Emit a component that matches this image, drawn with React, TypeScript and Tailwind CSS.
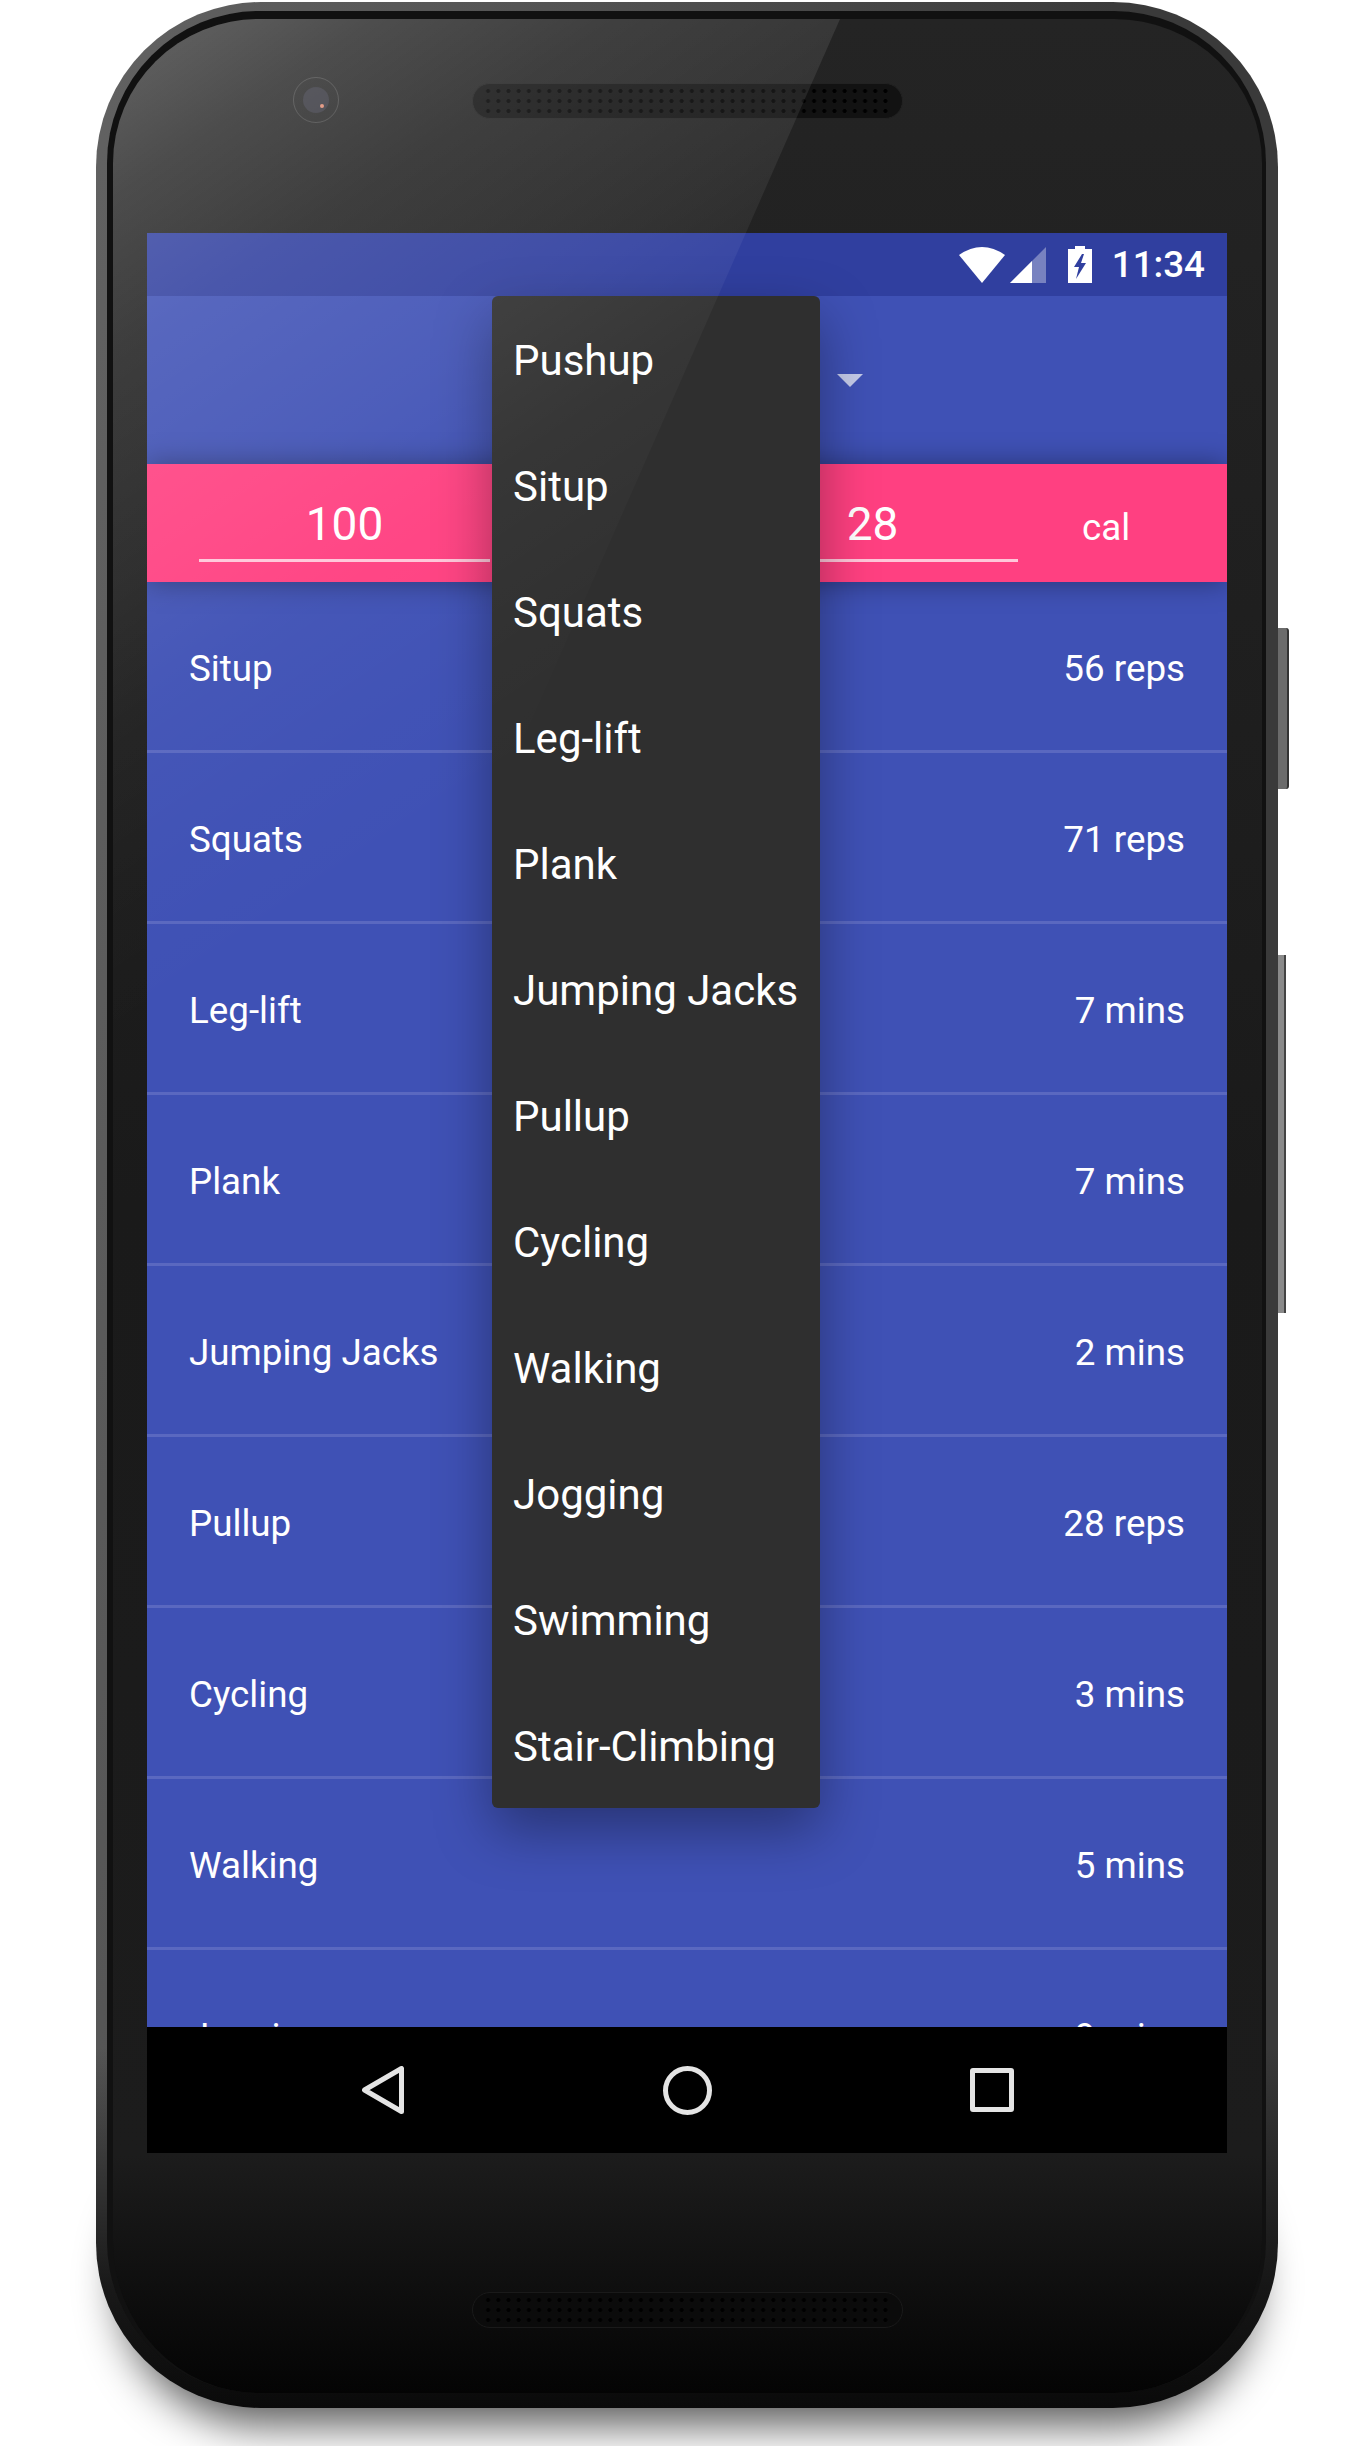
const listRows = [
  ["Situp", "56 reps"],
  ["Squats", "71 reps"],
  ["Leg-lift", "7 mins"],
  ["Plank", "7 mins"],
  ["Jumping Jacks", "2 mins"],
  ["Pullup", "28 reps"],
  ["Cycling", "3 mins"],
  ["Walking", "5 mins"],
  ["Jogging", "9 mins"],
];

const menuItems = [
  "Pushup",
  "Situp",
  "Squats",
  "Leg-lift",
  "Plank",
  "Jumping Jacks",
  "Pullup",
  "Cycling",
  "Walking",
  "Jogging",
  "Swimming",
  "Stair-Climbing",
];

const StatusBar = () => (
  <div className="flex h-[63px] shrink-0 items-center justify-end bg-[#303f9f] pr-[22px]">
    <svg width="46" height="36" viewBox="0 0 46 36">
      <path d="M0 8 Q23 -8 46 8 L23 36 Z" fill="#fff" />
    </svg>
    <svg width="36" height="36" viewBox="0 0 36 36" className="ml-[5px]">
      <path d="M0 36 L36 0 V36 Z" fill="#fff" fillOpacity="0.35" />
      <path d="M0 36 L22 14 V36 Z" fill="#fff" />
    </svg>
    <svg width="24" height="37" viewBox="0 0 24 37" className="ml-[22px] -mt-[1px]">
      <path
        fillRule="evenodd"
        d="M7 0 H17 V3 H24 V37 H0 V3 H7 Z M14 8 L6 21 H11 L8 33 L18 17 H13 L16 8 Z"
        fill="#fff"
      />
    </svg>
    <span className="ml-[20px] mt-[2px] text-[36.75px] leading-none font-medium text-white">
      11:34
    </span>
  </div>
);

const Field = ({ value }: { value: string }) => (
  <div className="flex h-full w-[291px] flex-col items-center justify-end pb-[20px]">
    <span className="text-[46px] leading-[56px] text-white">{value}</span>
    <div className="mt-[7px] h-[3px] w-full bg-white/70" />
  </div>
);

const Screen = () => (
  <div className="relative flex h-[1920px] w-[1080px] shrink-0 flex-col overflow-hidden">
    <StatusBar />
    <div className="flex h-[168px] shrink-0 items-start bg-[#3f51b5] pt-[78px] pl-[690px]">
      <svg width="26" height="13" viewBox="0 0 26 13">
        <path d="M0 0 H26 L13 13 Z" fill="#fff" fillOpacity="0.7" />
      </svg>
    </div>
    <div className="relative z-10 flex h-[118px] shrink-0 bg-[#ff4081] pl-[52px] shadow-[0_0_26px_rgba(0,0,0,0.38)]">
      <Field value="100" />
      <div className="ml-[237px]">
        <Field value="28" />
      </div>
      <div className="flex h-full w-[176px] items-end justify-center pb-[32px]">
        <span className="text-[36.75px] leading-[44px] text-white">cal</span>
      </div>
    </div>
    <div className="flex-1 overflow-hidden bg-[#3f51b5]">
      {listRows.map(([name, amount]) => (
        <div
          key={name}
          className="flex h-[171px] items-center justify-between border-b-[3px] border-[#5a68c0] px-[42px] pt-[5px] text-[36.75px] text-white"
        >
          <span>{name}</span>
          <span>{amount}</span>
        </div>
      ))}
    </div>
    <div className="flex h-[126px] shrink-0 items-center bg-black pl-[215px]">
      <svg width="42" height="48" viewBox="0 0 42 48">
        <path
          d="M39.5 2.5 V45.5 L2.5 24 Z"
          fill="none"
          stroke="#e4e4e4"
          strokeWidth="5"
          strokeLinejoin="round"
        />
      </svg>
      <svg width="49" height="49" viewBox="0 0 49 49" className="ml-[259px]">
        <circle cx="24.5" cy="24.5" r="22" fill="none" stroke="#e4e4e4" strokeWidth="5" />
      </svg>
      <div className="ml-[258px] h-[44px] w-[44px] rounded-[3px] border-[5px] border-[#e4e4e4]" />
    </div>
    <div className="absolute top-[63px] left-[345px] z-20 w-[328px] rounded-[6px] bg-[#2f2f2f] shadow-[0_22px_56px_rgba(0,0,0,0.36)]">
      {menuItems.map((item) => (
        <div
          key={item}
          className="flex h-[126px] items-center pt-[3px] pl-[21px] text-[42px] text-white"
        >
          {item}
        </div>
      ))}
    </div>
  </div>
);

const Speaker = ({ bottom }: { bottom?: boolean }) => (
  <div
    className={
      bottom
        ? "h-[36px] w-[431px] shrink-0 rounded-full border border-[#1a1a1a] bg-[#0b0b0b] px-[10px] py-[2px]"
        : "ml-[133px] h-[36px] w-[431px] shrink-0 rounded-full border border-[#222] bg-[#121212] px-[10px] py-[2px]"
    }
  >
    <div className="h-[30px] w-full bg-[radial-gradient(circle,#000_1.6px,transparent_2.4px)] bg-[length:10.2px_10px]" />
  </div>
);

export default function App() {
  return (
    <div className="relative h-[2446px] w-[1370px] overflow-hidden bg-white pt-[2px] pl-[96px] font-[Roboto,sans-serif]">
      {/* shadow under the phone */}
      <div className="absolute top-[2140px] left-[120px] h-[285px] w-[1135px] rounded-[150px] bg-black/65 blur-[22px]" />

      {/* side buttons */}
      <div className="absolute top-[628px] left-[1278px] h-[161px] w-[11px] rounded-r-[3px] border-r-2 border-[#333] bg-[#6b6b6b]" />
      <div className="absolute top-[955px] left-[1278px] h-[358px] w-[8px] border-r-2 border-[#444] bg-[#8a8a8a]" />

      <div className="relative h-[2406px] w-[1182px] rounded-[165px] bg-[linear-gradient(180deg,transparent_85%,rgba(18,18,18,0.9)_95%,#0a0a0a_100%),linear-gradient(100deg,#626262_0%,#525252_30%,#3a3a3a_65%,#3a3a3a_100%)] pt-[9px] pr-[12px] pb-[15px] pl-[11px]">
        <div className="relative flex h-full flex-col overflow-hidden rounded-[152px] border-t-8 border-r-4 border-l-[6px] border-[#111] bg-[linear-gradient(180deg,#242424_0%,#1a1a1a_50%,#1c1c1c_90%,#040404_100%)] pl-[34px]">
          <div className="-ml-[34px] flex h-[214px] shrink-0 items-start pt-[64px] pl-[180px]">
            <div className="-mt-[6px] flex h-[46px] w-[46px] shrink-0 items-center justify-center rounded-full border border-white/15">
              <div className="flex h-[26px] w-[26px] items-end justify-end rounded-full bg-[#33333b] p-[5px]">
                <div className="h-[4px] w-[4px] rounded-full bg-[#e08a70]" />
              </div>
            </div>
            <Speaker />
          </div>
          <Screen />
          <div className="-ml-[34px] flex flex-1 items-start justify-center pt-[139px]">
            <Speaker bottom />
          </div>

          {/* glass reflection over the upper left */}
          <div className="pointer-events-none absolute top-0 left-0 z-30 h-[1000px] w-full bg-[linear-gradient(146deg,rgba(255,255,255,0.3)_0%,rgba(255,255,255,0.19)_10%,rgba(255,255,255,0.125)_19%,rgba(255,255,255,0.075)_32%,rgba(255,255,255,0.035)_40%,rgba(255,255,255,0.012)_50%,transparent_58%)] [clip-path:polygon(0_0,727px_0,287px_1000px,0_1000px)]" />
        </div>
      </div>
    </div>
  );
}
